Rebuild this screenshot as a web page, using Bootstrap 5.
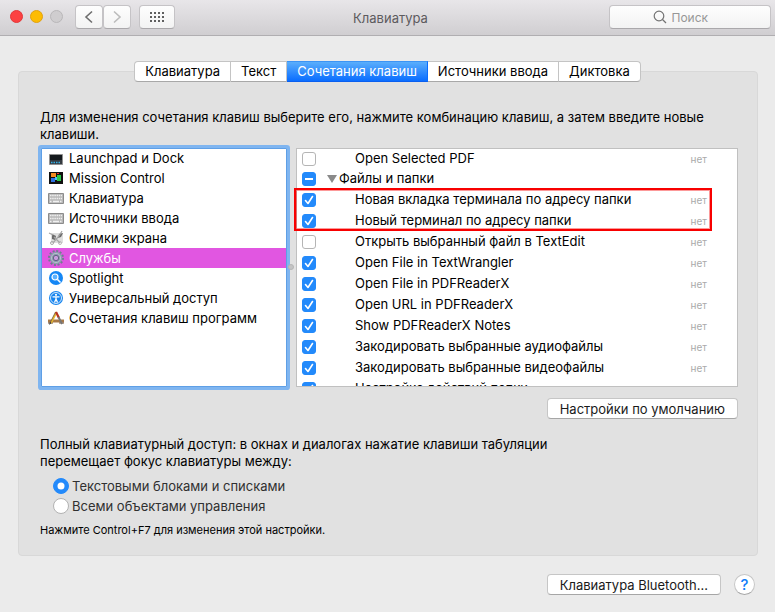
<!DOCTYPE html>
<html lang="ru">
<head>
<meta charset="utf-8">
<meta name="viewport" content="width=device-width, initial-scale=1">
<title>Клавиатура</title>
<link href="https://cdn.jsdelivr.net/npm/bootstrap@5.3.0/dist/css/bootstrap.min.css" rel="stylesheet">
<style>
body{background:#ebebeb;color:#000;font:13px/17px Inter,Roboto,"Liberation Sans",sans-serif;overflow-x:hidden}
.titlebar{display:grid;grid-template-columns:1fr auto 1fr;height:36px;padding:0 4px 2px 10px;background:linear-gradient(#e8e6e9,#d0ced1);border-bottom:1px solid #b0aeb1}
.dots{gap:7px;margin-right:12px}
.dot{width:13px;height:13px;border-radius:50%;border:1px solid;padding:0}
.dot-red{background:#fc4142;border-color:#e2383a}
.dot-amber{background:#fdbc02;border-color:#e0a112}
.dot-off{background:#cfcdcf;border-color:#b9b7b9}
.tool{height:24px;border:1px solid #c5c3c6;border-bottom-color:#aaa8ab;border-radius:4px;background:linear-gradient(#fefefe,#f3f3f3);padding:0;display:flex;align-items:center;justify-content:center}
.tool-nav{width:28px}
.tool-grid{width:36px}
.title-text{color:#5d5b5e;font-size:13px;line-height:17px;font-weight:400;padding-top:4px}
.search{width:162px;gap:5px;justify-self:end}
.search input{width:56px;border:0;background:none;padding:1px 0 0;font-size:12px;color:#444;outline:0}
.search input::placeholder{color:#979797;opacity:1}
.tabs{margin-top:25px;position:relative;z-index:1}
.tab{height:21px;padding:0 10px;border:1px solid #c4c4c4;border-bottom-color:#a8a8a8;border-left-width:0;background:#fff;line-height:17px;color:#000}
.tab:first-child{border-left-width:1px;border-radius:4px 0 0 4px}
.tab:last-child{border-radius:0 4px 4px 0}
.tab.current{background:linear-gradient(#5aaefc,#0a6dff);border-color:#3c94f5 #0a6dff #0a5fef;color:#fff}
.pane{margin:-11px 17px 0 18px;padding:37px 19px 16px 21px;background:#e1e1e1;border:1px solid #d8d8d8;border-radius:4px}
.lists{display:grid;grid-template-columns:247px 1fr;gap:9px;margin:5px 0 11px 0;height:239px;position:relative}
.cats{background:#fff;border:1px solid #5e9fe6;box-shadow:0 0 0 3px #7fb5f0;border-radius:1px;margin:0 0 0 1px;padding:0}
.cats a{display:flex;align-items:center;height:20px;padding-left:6px;gap:5px;color:#000;text-decoration:none}
.cats a:first-child{height:19px}
.cats a.chosen{background:#e156e1;color:#fff}
.cats svg{width:16px;height:16px;flex:none}
.keys{background:#fff;border:1px solid #c0c0c0;overflow:hidden;padding:0;margin:0}
.keys li{display:flex;align-items:center;height:21px;padding:0 30px 0 5px;line-height:17px}
.keys li:first-child{height:19px}
.keys label{padding-left:39px;flex:1;white-space:nowrap}
.keys .group label{padding-left:2px}
.keys .twist{width:10px;height:8px;margin-left:11px;fill:#8a8a8a}
.keys .none{font-size:10px;padding-top:2px;color:#aaa}
.keys .form-check-input{width:14px;height:14px;margin:0;border-radius:3px;border-color:#b5b5b5;flex:none;box-shadow:none}
.keys .form-check-input:checked,.keys .form-check-input:indeterminate{background-color:#238afb;border-color:#238afb}
.keys .form-check-input:checked{background-image:url("data:image/svg+xml,%3Csvg xmlns='http://www.w3.org/2000/svg' viewBox='0 0 12 12'%3E%3Cpath fill='none' stroke='%23fff' stroke-width='1.6' stroke-linecap='round' stroke-linejoin='round' d='m2.500 6.500 2.500 3 4.500-7'/%3E%3C/svg%3E")}
.keys .form-check-input:indeterminate{background-image:url("data:image/svg+xml,%3Csvg xmlns='http://www.w3.org/2000/svg' viewBox='0 0 12 12'%3E%3Cpath stroke='%23fff' stroke-width='2' d='M2 6h8'/%3E%3C/svg%3E")}
.marker{position:absolute;left:254px;top:40px;right:26px;height:43px;border:2px solid #f80000;box-shadow:inset 0 0 0 1px #f8000066;pointer-events:none}
.grip{position:absolute;left:248px;top:116px;width:6px;height:6px;border-radius:50%;background:#c4c4c4;border:1px solid #b5b5b5}
.push{height:21px;background:#fff;border:1px solid #c6c6c6;border-bottom-color:#a6a6a6;border-radius:4px;padding:0 12px;line-height:18px;color:#1a1a1a}
.access{max-width:540px;margin-top:17px}
.choices{padding-top:6px}
.choice{height:20px;gap:3px;padding-left:13px;color:#303030}
.choice .form-check-input{width:16px;height:16px;margin:0;border-color:#b2b2b2;box-shadow:none}
.choice .form-check-input:checked{background-color:#238afb;border-color:#238afb}
.hint{font-size:11px;line-height:17px;margin-top:6px}
.foot{padding:18px 20px 16px;gap:13px}
.help{width:21px;height:21px;border-radius:50%;border:1px solid #c6c6c6;border-bottom-color:#a6a6a6;background:#fff;color:#0f7cf9;font-size:15px;font-weight:500;line-height:18px;padding:0}
</style>
<script src="https://cdn.jsdelivr.net/npm/bootstrap@5.3.0/dist/js/bootstrap.bundle.min.js"></script>
</head>
<body>
<header class="titlebar align-items-center">
  <div class="d-flex align-items-center">
    <div class="dots d-flex">
      <button class="dot dot-red" aria-label="Закрыть"></button>
      <button class="dot dot-amber" aria-label="Свернуть"></button>
      <button class="dot dot-off" aria-label="Развернуть" disabled></button>
    </div>
    <button class="tool tool-nav" aria-label="Назад"><svg width="10" height="14" viewBox="0 0 10 14" fill="none" stroke="#6e6e6e" stroke-width="1.6"><path d="M8 1.5 2 7l6 5.500"/></svg></button>
    <button class="tool tool-nav" aria-label="Вперёд"><svg width="10" height="14" viewBox="0 0 10 14" fill="none" stroke="#bcbcbc" stroke-width="1.6"><path d="M2 1.500 8 7l-6 5.500"/></svg></button>
    <button class="tool tool-grid ms-2" aria-label="Показать все"><svg width="16" height="12" fill="#5f5f5f"><path d="M1 1h2v2H1zM5 1h2v2H5zM9 1h2v2H9zM13 1h2v2h-2zM1 5h2v2H1zM5 5h2v2H5zM9 5h2v2H9zM13 5h2v2h-2zM1 9h2v2H1zM5 9h2v2H5zM9 9h2v2H9zM13 9h2v2h-2z"/></svg></button>
  </div>
  <h1 class="title-text m-0">Клавиатура</h1>
  <div class="tool search"><svg width="14" height="14" viewBox="0 0 14 14" fill="none" stroke="#737373" stroke-width="1.2"><circle cx="6" cy="6" r="4.800"/><path d="m9.500 9.500 3.500 3.500"/></svg><input type="text" placeholder="Поиск" aria-label="Поиск"></div>
</header>
<nav class="tabs d-flex justify-content-center">
  <button class="tab">Клавиатура</button><button class="tab">Текст</button><button class="tab current">Сочетания клавиш</button><button class="tab">Источники ввода</button><button class="tab">Диктовка</button>
</nav>
<main class="pane">
  <p class="m-0">Для изменения сочетания клавиш выберите его, нажмите комбинацию клавиш, а затем введите новые клавиши.</p>
  <div class="lists">
    <nav class="cats">
      <a href="#"><svg viewBox="0 0 16 16"><path fill="#343a40" stroke="#909090" d="M1.500 3.500h13v10h-13z"/><path fill="#15191d" d="M2 4h12v5H2z"/><path stroke="#35b1e8" stroke-width="1.500" stroke-dasharray="1.500 1" d="M3 11.500h10"/></svg>Launchpad и Dock</a>
      <a href="#"><svg viewBox="0 0 16 16"><path fill="#101010" d="M1 2h14v12H1z"/><path fill="#f38b20" d="M3 3h5v4H3z"/><path fill="#2d70e2" d="M3 8h4v4H3z"/><path fill="#27c84a" d="M9 5h4v6H9z"/><path fill="#4ac8ee" d="M7 7h2v3H7z"/><path stroke="#e33" d="M9 3.500h2"/></svg>Mission Control</a>
      <a href="#"><svg viewBox="0 0 16 16"><path fill="#b9b9b9" stroke="#8c8c8c" d="M.5 3.500h15v10H.5z"/><path stroke="#f0f0f0" stroke-width="1.500" stroke-dasharray="1.500 .7" d="M2 5.500h12M2 8.500h12M2 11.500h2m8 0h2"/><path stroke="#f0f0f0" stroke-width="1.500" d="M5 11.500h6"/></svg>Клавиатура</a>
      <a href="#"><svg viewBox="0 0 16 16"><path fill="#b9b9b9" stroke="#8c8c8c" d="M.5 3.500h15v10H.5z"/><path stroke="#f0f0f0" stroke-width="1.500" stroke-dasharray="1.500 .7" d="M2 5.500h12M2 8.500h12M2 11.500h2m8 0h2"/><path stroke="#f0f0f0" stroke-width="1.500" d="M5 11.500h6"/></svg>Источники ввода</a>
      <a href="#"><svg viewBox="0 0 16 16" fill="none"><path fill="#dedede" d="M3 3h12v10H3z"/><path fill="#6a6a6a" d="m4 4 4 2-1 4-3-1zM11 4l4-1-2 4-3 1z"/><path stroke="#a5a5a5" stroke-width="1.200" d="m1 3 4 2m9-4-3 5-6 7m1-6 6 6"/><circle cx="4" cy="13" r="1.500" stroke="#aaa"/><circle cx="12" cy="13" r="1.500" stroke="#bbb"/></svg>Снимки экрана</a>
      <a href="#" class="chosen" aria-current="true"><svg viewBox="0 0 16 16" fill="none"><circle cx="8" cy="8" r="6.800" stroke="#6f7c90" stroke-width="2.400" stroke-dasharray="2 1.560"/><circle cx="8" cy="8" r="4.600" stroke="#8d9aae" stroke-width="3.200"/><circle cx="8" cy="8" r="4.600" stroke="#b5bfcd"/><circle cx="8" cy="8" r="2.700" fill="#c79bdc" stroke="#5c6880"/></svg>Службы</a>
      <a href="#"><svg viewBox="0 0 16 16" fill="none"><circle cx="8" cy="8" r="7" fill="#1587f5"/><circle cx="7" cy="7" r="3" fill="#59b1ff" stroke="#fff" stroke-width="1.200"/><path stroke="#fff" stroke-width="1.600" d="m9.500 9.500 3 3"/></svg>Spotlight</a>
      <a href="#"><svg viewBox="0 0 16 16" fill="none"><circle cx="8" cy="8" r="7" fill="#1684ee"/><circle cx="8" cy="8" r="5.500" stroke="#fff" stroke-width=".8"/><circle cx="8" cy="4.800" r="1.100" fill="#fff"/><path stroke="#fff" stroke-width="1.300" d="M4.500 6.800h7M8 7v2.500M8 9l-1.500 3.500M8 9l1.500 3.500"/></svg>Универсальный доступ</a>
      <a href="#"><svg viewBox="0 0 16 16" fill="none"><path stroke="#a87846" stroke-width="3" d="M0 11h16"/><path stroke="#745239" d="M0 13h5m6 0h5"/><path stroke="#e5b62e" stroke-width="2" d="m8.500 2-5.500 11"/><path stroke="#5d4940" stroke-width=".7" d="m7.500 2-5.500 11"/><path stroke="#b63223" stroke-width="2.200" d="m8 2 3 6"/><path stroke="#777" stroke-width="2" d="m10.500 7 3.500 7"/><path fill="#333" d="m2 12 1.500 1L1 15z"/></svg>Сочетания клавиш программ</a>
    </nav>
    <ul class="keys list-unstyled">
      <li><input class="form-check-input" type="checkbox" id="k1"><label for="k1">Open Selected PDF</label><span class="none">нет</span></li>
      <li class="group"><input class="form-check-input" type="checkbox" id="k2"><svg class="twist" viewBox="0 0 10 8"><path d="M0 0h10L5 8z"/></svg><label for="k2">Файлы и папки</label></li>
      <li><input class="form-check-input" type="checkbox" id="k3" checked><label for="k3">Новая вкладка терминала по адресу папки</label><span class="none">нет</span></li>
      <li><input class="form-check-input" type="checkbox" id="k4" checked><label for="k4">Новый терминал по адресу папки</label><span class="none">нет</span></li>
      <li><input class="form-check-input" type="checkbox" id="k5"><label for="k5">Открыть выбранный файл в TextEdit</label><span class="none">нет</span></li>
      <li><input class="form-check-input" type="checkbox" id="k6" checked><label for="k6">Open File in TextWrangler</label><span class="none">нет</span></li>
      <li><input class="form-check-input" type="checkbox" id="k7" checked><label for="k7">Open File in PDFReaderX</label><span class="none">нет</span></li>
      <li><input class="form-check-input" type="checkbox" id="k8" checked><label for="k8">Open URL in PDFReaderX</label><span class="none">нет</span></li>
      <li><input class="form-check-input" type="checkbox" id="k9" checked><label for="k9">Show PDFReaderX Notes</label><span class="none">нет</span></li>
      <li><input class="form-check-input" type="checkbox" id="k10" checked><label for="k10">Закодировать выбранные аудиофайлы</label><span class="none">нет</span></li>
      <li><input class="form-check-input" type="checkbox" id="k11" checked><label for="k11">Закодировать выбранные видеофайлы</label><span class="none">нет</span></li>
      <li><input class="form-check-input" type="checkbox" id="k12" checked><label for="k12">Настройка действий папки</label><span class="none">нет</span></li>
    </ul>
    <div class="grip"></div>
    <div class="marker"></div>
  </div>
  <div class="d-flex justify-content-end"><button class="push">Настройки по умолчанию</button></div>
  <p class="access mb-0">Полный клавиатурный доступ: в окнах и диалогах нажатие клавиши табуляции перемещает фокус клавиатуры между:</p>
  <div class="choices">
    <div class="choice d-flex align-items-center"><input class="form-check-input" type="radio" name="focus" id="r1" checked><label for="r1">Текстовыми блоками и списками</label></div>
    <div class="choice d-flex align-items-center"><input class="form-check-input" type="radio" name="focus" id="r2"><label for="r2">Всеми объектами управления</label></div>
  </div>
  <p class="hint mb-0">Нажмите Control+F7 для изменения этой настройки.</p>
</main>
<footer class="foot d-flex justify-content-end"><button class="push">Клавиатура Bluetooth…</button><button class="help" aria-label="Справка">?</button></footer>
<script>document.getElementById('k2').indeterminate = true;</script>
</body>
</html>
